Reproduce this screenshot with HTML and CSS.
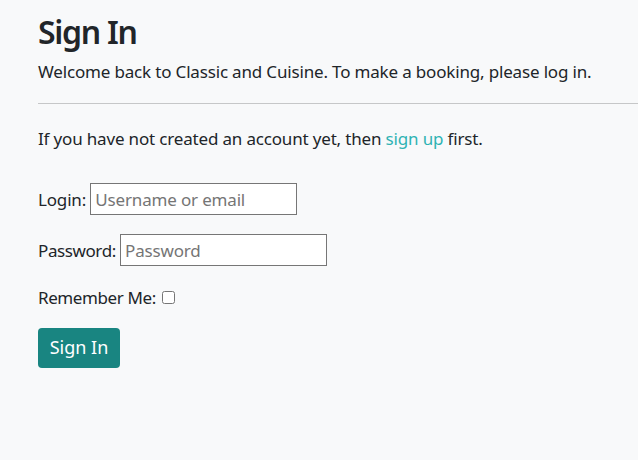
FILE: index.html
```html
<!DOCTYPE html>
<html lang="en">
<head>
<meta charset="utf-8">
<title>Sign In</title>
<link rel="stylesheet" href="styles.css">
</head>
<body>
<main class="page">
  <h1 class="title">Sign In</h1>
  <p class="lead">Welcome back to Classic and Cuisine. To make a booking, please log in.</p>
  <hr class="rule">
  <p class="note">If you have not created an account yet, then <a class="link" href="#">sign up</a> first.</p>
  <form class="form">
    <p class="field"><label class="label" for="login">Login:</label> <input class="input" id="login" type="text" placeholder="Username or email"></p>
    <p class="field"><label class="label label-tight" for="password">Password:</label> <input class="input" id="password" type="password" placeholder="Password"></p>
    <p class="field field-check"><label class="label label-tight" for="remember">Remember Me:</label> <input class="check" id="remember" type="checkbox"></p>
    <button class="btn" type="submit">Sign In</button>
  </form>
</main>
</body>
</html>
```
FILE: styles.css
```css
html, body {
  margin: 0;
  padding: 0;
  background: #f8f9fa;
}
body {
  font-family: "Noto Sans", "Open Sans", sans-serif;
  font-size: 17px;
  letter-spacing: -0.17px;
  line-height: 1.5;
  color: #212529;
}
.page {
  padding: 13px 0 0 38px;
}
.title {
  font-size: 32px;
  font-weight: 600;
  letter-spacing: -1.3px;
  line-height: 1.2;
  margin: 0 0 8px;
}
.lead {
  margin: 0 0 18px;
}
.rule {
  border: 0;
  border-top: 1px solid #c6c7c8;
  margin: 0;
}
.note {
  margin: 22px 0 32px;
}
.link {
  color: #2fb3b3;
  text-decoration: none;
}
.form {
  margin: 0;
}
.field {
  margin: 0 0 19px;
}
.field-check {
  margin-bottom: 17px;
}
.label {
  color: #212529;
}
.label-tight {
  letter-spacing: -0.4px;
}
.input {
  box-sizing: border-box;
  width: 207px;
  height: 32px;
  border: 1px solid #767676;
  border-radius: 0;
  padding: 1px 4px;
  font: inherit;
  letter-spacing: -0.17px;
  color: #212529;
  background: #fff;
  vertical-align: baseline;
}
.input::placeholder {
  color: #757575;
}
.check {
  width: 13px;
  height: 13px;
  margin: 3px 3px 3px 2px;
}
.btn {
  font: inherit;
  font-size: 18px;
  color: #fff;
  background: #198581;
  border: 0;
  border-radius: 4px;
  padding: 0;
  height: 40px;
  width: 82px;
  white-space: nowrap;
}
```
